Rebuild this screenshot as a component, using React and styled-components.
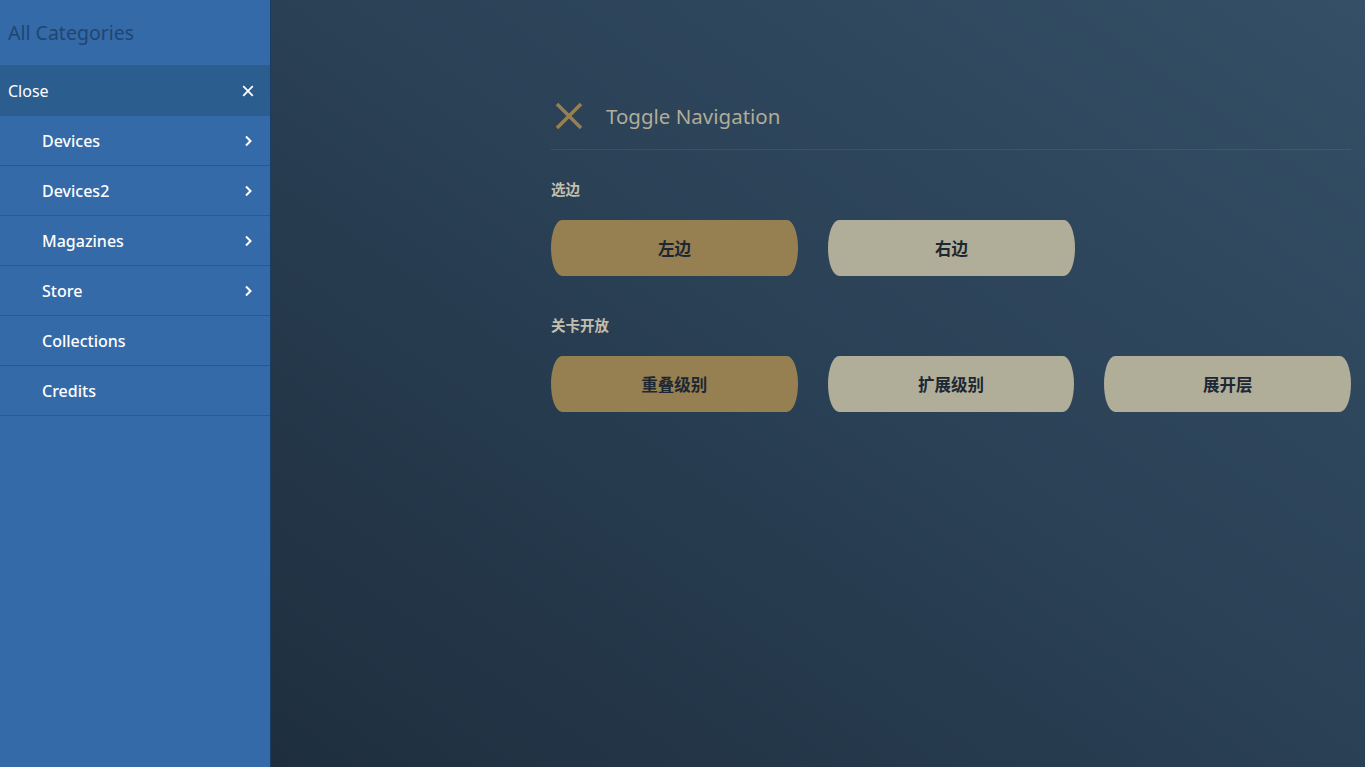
import styled, { createGlobalStyle } from "styled-components";

const GlobalStyle = createGlobalStyle`
  html, body {
    margin: 0;
    padding: 0;
    height: 100%;
  }
  body {
    font-family: "Noto Sans", "Noto Sans CJK SC", sans-serif;
    background: #26384b;
  }
  #root {
    height: 100%;
  }
`;

const menuItems = [
  { label: "Devices", sub: true },
  { label: "Devices2", sub: true },
  { label: "Magazines", sub: true },
  { label: "Store", sub: true },
  { label: "Collections", sub: false },
  { label: "Credits", sub: false },
];

const sideOptions = [
  { label: "左边", active: true },
  { label: "右边", active: false },
];

const levelOptions = [
  { label: "重叠级别", active: true },
  { label: "扩展级别", active: false },
  { label: "展开层", active: false },
];

function Chevron() {
  return (
    <svg width="10" height="14" viewBox="0 0 10 14">
      <path d="M3 2.5 L7.5 7 L3 11.5" fill="none" stroke="#fff" strokeWidth="2" />
    </svg>
  );
}

function CloseIcon({ size, color, width }) {
  return (
    <svg width={size} height={size} viewBox="0 0 20 20">
      <path d="M2 2 L18 18 M18 2 L2 18" stroke={color} strokeWidth={width} />
    </svg>
  );
}

export default function App() {
  return (
    <>
      <GlobalStyle />
      <Page>
        <Sidebar>
          <SideTitle>All Categories</SideTitle>
          <CloseRow>
            <span>Close</span>
            <CloseIcon size={12} color="#fff" width={3} />
          </CloseRow>
          {menuItems.map((item) => (
            <MenuItem key={item.label}>
              <span>{item.label}</span>
              {item.sub && <Chevron />}
            </MenuItem>
          ))}
        </Sidebar>
        <Main>
          <Content>
            <ToggleBar>
              <CloseIcon size={30} color="#967f50" width={2.4} />
              <ToggleText>Toggle Navigation</ToggleText>
            </ToggleBar>
            <GroupLabel>选边</GroupLabel>
            <ButtonRow>
              {sideOptions.map((o) => (
                <OptionButton key={o.label} $active={o.active}>
                  {o.label}
                </OptionButton>
              ))}
            </ButtonRow>
            <GroupLabel>关卡开放</GroupLabel>
            <ButtonRow>
              {levelOptions.map((o) => (
                <OptionButton key={o.label} $active={o.active}>
                  {o.label}
                </OptionButton>
              ))}
            </ButtonRow>
          </Content>
        </Main>
      </Page>
    </>
  );
}

const Page = styled.div`
  display: flex;
  height: 100vh;
  overflow: hidden;
`;

const Sidebar = styled.nav`
  width: 270px;
  flex-shrink: 0;
  background: #346aa7;
  border-right: 1px solid #1b3d63;
  display: flex;
  flex-direction: column;
`;

const SideTitle = styled.div`
  height: 65px;
  display: flex;
  align-items: center;
  padding: 0 8px;
  font-size: 19.5px;
  color: #1f4672;
  border-bottom: 1px solid #2d5d91;
`;

const CloseRow = styled.div`
  height: 50px;
  display: flex;
  align-items: center;
  justify-content: space-between;
  padding: 0 16px 0 8px;
  background: #2c5d8f;
  color: #fff;
  font-size: 16px;
`;

const MenuItem = styled.div`
  height: 49px;
  display: flex;
  align-items: center;
  justify-content: space-between;
  padding: 0 17px 0 42px;
  color: #fff;
  font-size: 16px;
  font-weight: 500;
  border-bottom: 1px solid #2a598c;
`;

const Main = styled.main`
  flex: 1;
  background: linear-gradient(35deg, #1e2e3e 0%, #2a4055 50%, #344f66 100%);
  padding: 100px 14px 0 280px;
`;

const Content = styled.div`
  width: 800px;
`;

const ToggleBar = styled.div`
  display: flex;
  align-items: center;
  gap: 22px;
  padding: 1px 0 18px 3px;
  border-bottom: 1px solid rgba(120, 150, 175, 0.18);
`;

const ToggleText = styled.span`
  font-size: 20.5px;
  color: #b0ad98;
`;

const GroupLabel = styled.div`
  margin-top: 28px;
  font-size: 14.5px;
  font-weight: 700;
  color: #c2bfae;
`;

const ButtonRow = styled.div`
  display: flex;
  gap: 30px;
  margin-top: 21px;
  margin-bottom: 38px;
`;

const OptionButton = styled.button`
  width: 247px;
  height: 56px;
  border: none;
  border-radius: 11px / 28px;
  background: ${(p) => (p.$active ? "#967f50" : "#b0ad99")};
  color: #1c2733;
  font-family: "Noto Sans", "Noto Sans CJK SC", sans-serif;
  font-size: 16.5px;
  font-weight: 700;
  cursor: pointer;
`;
